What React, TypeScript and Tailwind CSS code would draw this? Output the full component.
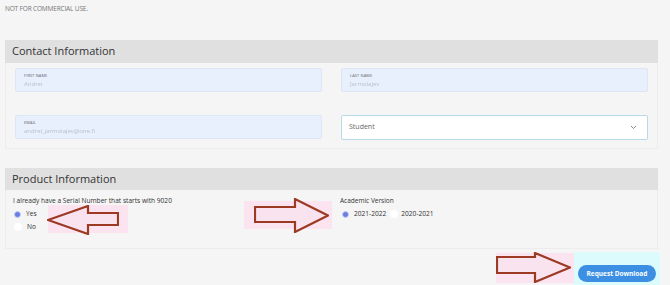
import React from "react";

type ArrowProps = { left: number; top: number; w: number; h: number; dir: "left" | "right"; shaftTop: number; shaftBottom: number; headAt: number };

// hand-drawn style markup arrow laid over the screenshot
function Arrow({ left, top, w, h, dir, shaftTop, shaftBottom, headAt }: ArrowProps) {
    const mid = h / 2;
    const pts =
        dir === "right"
            ? `1,${shaftTop} ${headAt},${shaftTop} ${headAt},1 ${w - 1},${mid} ${headAt},${h - 1} ${headAt},${shaftBottom} 1,${shaftBottom}`
            : `${w - 1},${shaftTop} ${w - headAt},${shaftTop} ${w - headAt},1 1,${mid} ${w - headAt},${h - 1} ${w - headAt},${shaftBottom} ${w - 1},${shaftBottom}`;
    return (
        <svg className="absolute" style={{ left, top }} width={w} height={h} viewBox={`0 0 ${w} ${h}`}>
            <polygon points={pts} fill="#f9e3ee" stroke="#9c3a24" strokeWidth="2.2" strokeLinejoin="miter" />
        </svg>
    );
}

function Field({ label, value }: { label: string; value: string }) {
    return (
        <div className="h-[24px] bg-[#e8f0fe] rounded-[2px] border border-[#dde6f5] pl-[8px] pt-[4px]">
            <div className="text-[4px] leading-[5px] tracking-wide text-[#666] uppercase">{label}</div>
            <div className="text-[6px] leading-[9px] text-[#b9c0cc] blur-[0.6px] mt-[2px]">{value}</div>
        </div>
    );
}

function Radio({ on }: { on: boolean }) {
    return on ? (
        <span className="w-[7px] h-[7px] rounded-full bg-[#6b7de3] border border-[#c9d0f5] inline-block" />
    ) : (
        <span className="w-[8px] h-[8px] rounded-full bg-white inline-block" />
    );
}

export default function App() {
    return (
        <div
            className="relative w-[670px] h-[285px] bg-[#f5f5f5] overflow-hidden text-[#444]"
            style={{ fontFamily: '"Open Sans", "Noto Sans", sans-serif' }}
        >
            <p className="pl-[5px] pt-[5px] text-[6.5px] leading-[8px] text-[#777] tracking-tight">NOT FOR COMMERCIAL USE.</p>

            {/* contact */}
            <section className="ml-[5px] w-[653px] mt-[27px]">
                <div className="h-[23px] bg-[#e0e0e0] pl-[7px] flex items-center text-[11px] text-[#333] font-medium">
                    Contact Information
                </div>
                <div className="border border-t-0 border-[#ececec] grid grid-cols-2 gap-x-[19px] gap-y-[23px] pl-[9px] pr-[9px] pt-[5px] pb-[8px]">
                    <Field label="First name" value="Andrei" />
                    <Field label="Last name" value="Jarmolajev" />
                    <Field label="Email" value="andrei_jarmolajev@one.fi" />
                    <div className="h-[25px] bg-white rounded-[2px] border border-[#b7dbe9] flex items-center justify-between pl-[7px] pr-[10px]">
                        <span className="text-[7px] text-[#666]">Student</span>
                        <svg width="7" height="5" viewBox="0 0 7 5">
                            <path d="M1 1 L3.5 3.5 L6 1" fill="none" stroke="#888" strokeWidth="1" />
                        </svg>
                    </div>
                </div>
            </section>

            {/* product */}
            <section className="ml-[5px] w-[653px] mt-[19px]">
                <div className="h-[22px] bg-[#e0e0e0] pl-[7px] flex items-center text-[11px] text-[#333] font-medium">
                    Product Information
                </div>
                <div className="border border-t-0 border-[#ececec] h-[59px] flex pl-[7px] pt-[6px] text-[6.6px] text-[#333]">
                    <div className="w-[327px]">
                        <div className="leading-[10px]">I already have a Serial Number that starts with 9020</div>
                        <div className="flex items-center gap-[5px] mt-[3px] pl-[1px] h-[10px]">
                            <Radio on />
                            <span>Yes</span>
                        </div>
                        <div className="flex items-center gap-[5px] mt-[3px] pl-[1px] h-[10px]">
                            <Radio on={false} />
                            <span>No</span>
                        </div>
                    </div>
                    <div>
                        <div className="leading-[10px] text-[6.5px]">Academic Version</div>
                        <div className="flex items-center mt-[3px] pl-[2px] h-[10px]">
                            <Radio on />
                            <span className="ml-[5px]">2021-2022</span>
                            <span className="ml-[4px] flex"><Radio on={false} /></span>
                            <span className="ml-[3px]">2020-2021</span>
                        </div>
                    </div>
                </div>
            </section>

            <div className="w-[660px] flex justify-end mt-[3px]">
                <div className="bg-[#dcfbfd] px-[4px] py-[6px]">
                    <button className="h-[17px] w-[78px] rounded-full bg-[#3d8fe3] text-white text-[6.5px] font-bold">
                        Request Download
                    </button>
                </div>
            </div>

            {/* markup overlay */}
            <div className="absolute bg-[#fbe4f0] left-[48px] top-[205px] w-[80px] h-[28px]" />
            <Arrow left={47} top={205} w={72} h={30} dir="left" shaftTop={8} shaftBottom={20} headAt={31} />
            <div className="absolute bg-[#fbe4f0] left-[244px] top-[201px] w-[88px] h-[28px]" />
            <Arrow left={254} top={198} w={75} h={35} dir="right" shaftTop={9} shaftBottom={24} headAt={41} />
            <div className="absolute bg-[#fbe4f0] left-[496px] top-[253px] w-[78px] h-[30px]" />
            <Arrow left={496} top={252} w={75} h={31} dir="right" shaftTop={5} shaftBottom={21} headAt={39} />
        </div>
    );
}
